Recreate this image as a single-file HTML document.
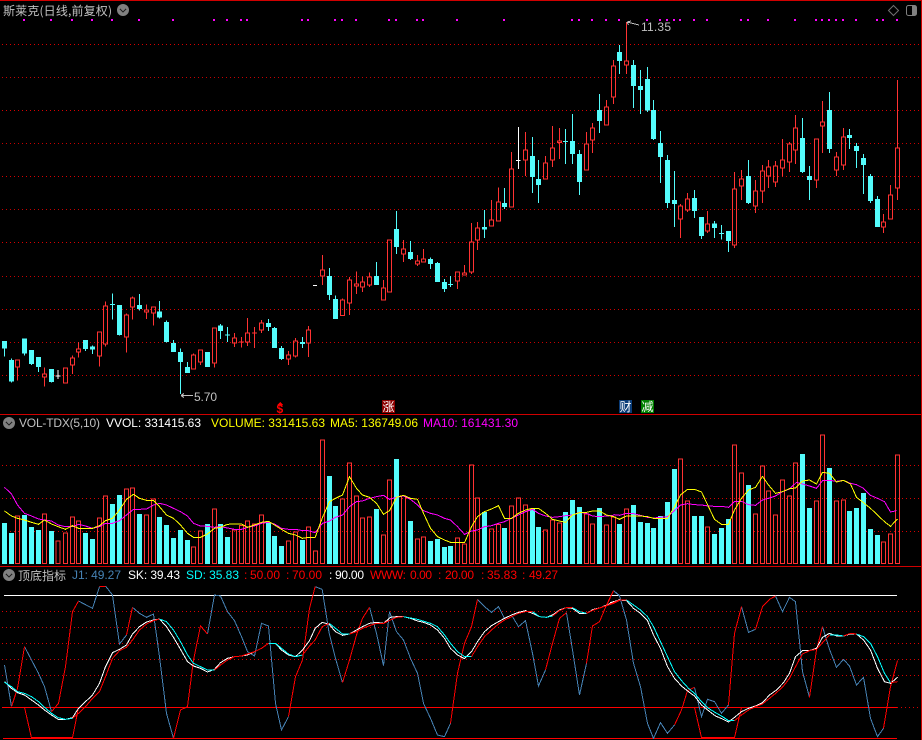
<!DOCTYPE html>
<html lang="zh">
<head>
<meta charset="utf-8">
<title>斯莱克</title>
<style>
html,body{margin:0;padding:0;background:#000;width:922px;height:740px;overflow:hidden}
svg{position:absolute;left:0;top:0;display:block;shape-rendering:crispEdges}
circle{shape-rendering:auto}
text{font-family:"Liberation Sans","WenQuanYi Zen Hei","Noto Sans CJK SC",sans-serif;font-size:12px;white-space:pre}
.cj{font-family:"WenQuanYi Zen Hei","Noto Sans CJK SC",sans-serif}
.cb{fill:none;stroke:#54fcfc;stroke-width:15}
.cw{fill:none;stroke:#54fcfc;stroke-width:3}
.rb{fill:none;stroke:#ff3232;stroke-width:3}
.wb{fill:none;stroke:#fff;stroke-width:3}
.ma5{fill:none;stroke:#ffff00;stroke-width:3}
.ma10{fill:none;stroke:#ff00ff;stroke-width:3}
.jb{fill:none;stroke:#4682b4;stroke-width:3}
.jr{fill:none;stroke:#ff0000;stroke-width:3}
.wl{fill:none;stroke:#fff;stroke-width:3}
.cl{fill:none;stroke:#00ffff;stroke-width:3}
</style>
</head>
<body>
<svg width="922" height="740" viewBox="0 0 922 740" xmlns="http://www.w3.org/2000/svg">
<rect width="922" height="740" fill="#000"/>
<g>
<!-- frame -->
<path d="M0 .5H922M0 414.5H922M0 566.5H922" stroke="#d00000" stroke-width="1" fill="none"/>
<path d="M921.5 0V740" stroke="#d00000" stroke-width="1" fill="none"/>
<!-- price grid -->
<path d="M2 44.5H920M2 110.5H920M2 176.5H920M2 242.5H920M2 309.5H920M2 375.5H920M2 465.5H920M2 498.5H920M2 531.5H920M2 611.5H920M2 627.5H920M2 643.5H920M2 659.5H920M2 675.5H920M897 707.5H920" stroke="#d80000" stroke-width="1" stroke-dasharray="1 3" fill="none"/>
<path d="M2 77.5H920M2 143.5H920M2 209.5H920M2 276.5H920M2 342.5H920" stroke="#c80000" stroke-width="1" stroke-dasharray="1 3" fill="none"/>
<!-- magenta dots -->
<path fill="#ff00ff" d="M23 19h2v2h-2zM50 19h2v2h-2zM71 19h2v2h-2zM91 19h2v2h-2zM111 19h2v2h-2zM138 19h2v2h-2zM172 19h2v2h-2zM213 19h2v2h-2zM226 19h2v2h-2zM240 19h2v2h-2zM246 19h2v2h-2zM301 19h2v2h-2zM307 19h2v2h-2zM334 19h2v2h-2zM341 19h2v2h-2zM355 19h2v2h-2zM388 19h2v2h-2zM395 19h2v2h-2zM416 19h2v2h-2zM422 19h2v2h-2zM456 19h2v2h-2zM503 19h2v2h-2zM571 19h2v2h-2zM578 19h2v2h-2zM591 19h2v2h-2zM605 19h2v2h-2zM618 19h2v2h-2zM646 19h2v2h-2zM659 19h2v2h-2zM666 19h2v2h-2zM673 19h2v2h-2zM679 19h2v2h-2zM693 19h2v2h-2zM706 19h2v2h-2zM740 19h2v2h-2zM747 19h2v2h-2zM767 19h2v2h-2zM794 19h2v2h-2zM815 19h2v2h-2zM821 19h2v2h-2zM828 19h2v2h-2zM835 19h2v2h-2zM842 19h2v2h-2zM855 19h2v2h-2zM876 19h2v2h-2zM882 19h2v2h-2zM896 19h2v2h-2z"/>
<!-- candles 1 -->
<g transform="translate(.1667,210) scale(.33333)">
<path class="cb" d="M13 393V416M34 450V514M73 385V430M94 420V462M115 441V471M154 477V516M256 390V417M277 410V419M358 285V375M418 285V297M478 304V322M499 336V396M520 399V426M541 426V456M562 471V489M622 426V471M661 346V363M682 373V377M805 339V351M823 354V414M844 414V447M907 396V402"/>
<path class="cw" d="M13 416V440M34 445V518M73 430V437M94 462V465M115 471V486M154 516V518M256 417V423M277 406V432M329.5 284H344.5M337 250V329M358 375V377M418 252V302M478 273V325M499 331V398M520 390V399M541 415V552M562 456V471"/>
<path class="cw" d="M661 342V387M682 351V396M805 327V363M823 351V354M844 408V450M907 381V414"/>
<path class="wb" d="M174 480V507M166.5 498H181.5"/>
<path class="rb" d="M46 449.5h12v22h-12zM52 473V512M127 491.5h12v9h-12zM133 472V490M133 502V530M190 473.5h12v46h-12zM211 443.5h12v21h-12zM217 436V442M217 466V492M229 416.5h12v10h-12zM235 396V415M235 428V443M292 365.5h12v73h-12zM298 440V470M310 287.5h12v115h-12zM316 274V286M316 404V410M373 314.5h12v67h-12zM379 310V313M379 383V428M391 263.5h12v28h-12zM397 259V262M397 293V329M433 299.5h12v7h-12zM439 283V298M439 308V327M454 290.5h12v19h-12zM460 311V347M574 434.5h12v43h-12zM580 430V433M595 419.5h12v37h-12zM601 458V465M637 353.5h12v105h-12zM643 460V473M697 383.5h12v16h-12zM703 369V382M703 401V411M716.5 395.5H731.5M724 381V413M736 368.5h12v28h-12zM742 324V367M742 398V408M755.5 369H770.5M763 351V414M778 338.5h12v22h-12zM784 330V337M784 362V369M859 434.5h12v13h-12zM865 423V433M865 449V465M880 392.5h12v46h-12zM886 384V391M886 440V443M919 359.5h12v39h-12zM925 348V358M925 400V441"/>
</g>
<!-- candles 2 -->
<g transform="translate(310.1667,100) scale(.33333)">
<path class="cb" d="M58 528V585M76 597V657M199 528V555M259 387V441M301 456V477M361 477V492M382 489V546M403 546V567M523 381V389M583 309V321M667 168V231M685 237V255M787 123V162M808 162V246M868 30V63"/>
<path class="cw" d="M58 504V600M76 586V597M199 486V528M259 333V462M301 423V480M361 473V507M382 486V489M403 537V576M413.5 554H428.5M421 528V561M523 330V414M583 264V327M667 111V279M685 180V309M758.5 124H773.5M766 87V192M787 42V192M808 150V285M868 -18V99"/>
<path class="wb" d="M9 556H21M625 81V207M618 181H631"/>
<path class="rb" d="M31 509.5h12v19h-12zM37 465V508M37 530V555M91 599.5h12v47h-12zM97 595V598M112 539.5h12v70h-12zM118 531V538M118 611V645M133 551.5h12v7h-12zM139 514V550M139 560V582M151 545.5h12v16h-12zM157 530V544M157 563V576M172 530.5h12v25h-12zM178 517V529M178 557V561M214 563.5h12v37h-12zM220 540V562M232 419.5h12v157h-12zM274 446.5h12v16h-12zM280 420V445M280 464V486M316 482.5h12v10h-12zM322 465V481M322 494V498M334 476.5h12v10h-12zM340 447V475M436 515.5h12v28h-12zM442 545V567M457 518.5h12v7h-12zM463 495V517M478 425.5h12v91h-12zM484 369V424M484 518V522M496 383.5h12v37h-12zM502 366V382M502 422V450M538 359.5h12v19h-12zM544 300V358M559 305.5h12v58h-12zM565 262V304M598 206.5h12v115h-12zM604 156V205M640 149.5h12v31h-12zM646 96V148M646 182V228M700 188.5h12v49h-12zM706 168V187M721 143.5h12v37h-12zM727 78V142M727 182V201M742 122.5h12v5h-12zM748 84V121M748 129V177M823 131.5h12v79h-12zM829 96V130M841 83.5h12v37h-12zM847 69V82M847 122V159M883 20.5h12v55h-12zM889 0V19"/>
</g>
<!-- candles 3 -->
<g transform="translate(610.1667,0) scale(.33333)">
<path class="cb" d="M28 156V183M70 195V258M91 258V270M112 237V331M130 330V417M151 429V471M172 480V609M193 600V612M253 594V633M274 651V708M313 670V684M355 693V723M415 528V609M577 414V516M598 528V540M658 330V447M718 405V414M739 438V453M760 474V495M781 528V603M802 597V681"/>
<path class="cw" d="M28 135V222M70 180V324M91 210V342M112 201V336M130 300V420M151 393V549M172 465V624M193 513V681M253 570V654M274 708V717M313 663V714M326.5 700H341.5M334 675V718M355 723V756M415 480V612M577 354V519M598 498V600M658 276V459M718 387V447M739 429V504M760 462V582M781 522V609M802 588V597"/>
<path class="rb" d="M4 197.5h12v94h-12zM10 180V196M10 293V312M43 182.5h12v13h-12zM49 66V181M49 197V222M205 617.5h12v40h-12zM211 612V616M211 659V714M226 596.5h12v34h-12zM232 579V595M232 632V636M286 671.5h12v22h-12zM292 633V670M292 695V699M367 566.5h12v169h-12zM373 516V565M373 737V744M388 536.5h12v22h-12zM394 510V535M394 560V600M430 572.5h12v46h-12zM436 540V571M436 620V639M451 512.5h12v61h-12zM457 495V511M457 575V609M469 500.5h12v28h-12zM475 480V499M475 530V564M490 497.5h12v49h-12zM496 483V496M496 548V561M511 479.5h12v25h-12zM517 417V478M517 506V530M532 431.5h12v55h-12zM538 426V430M538 488V516M550 383.5h12v67h-12zM556 345V382M556 452V492M613 416.5h12v124h-12zM619 542V564M631 365.5h12v13h-12zM637 303V364M637 380V459M673 470.5h12v40h-12zM679 456V469M679 512V528M694 410.5h12v85h-12zM700 384V409M700 497V510M814 665.5h12v16h-12zM820 642V664M820 683V699M835 584.5h12v73h-12zM841 555V583M856 443.5h12v121h-12zM862 240V442M862 566V600"/>
</g>
<!-- volume bars 1 -->
<g transform="translate(.1667,410) scale(.33333)">
<path class="cb" d="M13 339V462M34 369V462M73 315V462M94 351V462M115 360V462M154 363V462M256 369V462M277 387V462M337 282V462M358 255V462M418 312V462M478 321V462M499 345V462M520 384V462M541 360V462M562 390V462M622 342V462M661 342V462M682 381V462M805 339V462M823 378V462M844 408V462M907 390V462"/>
<path class="rb" d="M46 317.5h12V460.5h-12zM127 311.5h12V460.5h-12zM168 392.5h12V460.5h-12zM190 368.5h12V460.5h-12zM211 320.5h12V460.5h-12zM229 332.5h12V460.5h-12zM292 323.5h12V460.5h-12zM310 257.5h12V460.5h-12zM373 236.5h12V460.5h-12zM391 233.5h12V460.5h-12zM433 314.5h12V460.5h-12zM454 266.5h12V460.5h-12zM574 410.5h12V460.5h-12zM595 362.5h12V460.5h-12zM637 296.5h12V460.5h-12zM697 359.5h12V460.5h-12zM718 346.5h12V460.5h-12zM736 332.5h12V460.5h-12zM757 341.5h12V460.5h-12zM778 314.5h12V460.5h-12zM859 392.5h12V460.5h-12zM880 365.5h12V460.5h-12zM919 350.5h12V460.5h-12z"/>
</g>
<g transform="translate(310.1667,410) scale(.33333)">
<path class="cb" d="M58 198V462M76 288V462M199 297V462M259 147V462M301 333V462M361 393V462M382 387V462M403 411V462M421 408V462M523 306V462M583 354V462M667 297V462M685 351V462M766 306V462M787 270V462M808 291V462M868 294V462"/>
<path class="rb" d="M10 422.5h12V460.5h-12zM31 89.5h12V460.5h-12zM91 266.5h12V460.5h-12zM112 158.5h12V460.5h-12zM133 257.5h12V460.5h-12zM151 323.5h12V460.5h-12zM172 320.5h12V460.5h-12zM214 374.5h12V460.5h-12zM232 209.5h12V460.5h-12zM274 257.5h12V460.5h-12zM316 386.5h12V460.5h-12zM334 380.5h12V460.5h-12zM436 383.5h12V460.5h-12zM457 401.5h12V460.5h-12zM478 164.5h12V460.5h-12zM496 263.5h12V460.5h-12zM538 356.5h12V460.5h-12zM559 343.5h12V460.5h-12zM598 287.5h12V460.5h-12zM619 263.5h12V460.5h-12zM640 284.5h12V460.5h-12zM700 359.5h12V460.5h-12zM721 329.5h12V460.5h-12zM742 338.5h12V460.5h-12zM823 311.5h12V460.5h-12zM841 341.5h12V460.5h-12zM883 344.5h12V460.5h-12z"/>
</g>
<g transform="translate(610.1667,410) scale(.33333)">
<path class="cb" d="M28 342V462M70 285V462M91 336V462M112 339V462M130 354V462M151 318V462M172 276V462M193 177V462M253 318V462M274 318V462M313 372V462M334 354V462M355 327V462M415 225V462M577 132V462M598 294V462M658 174V462M718 303V462M739 294V462M760 249V462M781 357V462M802 375V462"/>
<path class="rb" d="M4 321.5h12V460.5h-12zM43 296.5h12V460.5h-12zM205 146.5h12V460.5h-12zM226 272.5h12V460.5h-12zM286 350.5h12V460.5h-12zM367 104.5h12V460.5h-12zM388 188.5h12V460.5h-12zM430 311.5h12V460.5h-12zM451 167.5h12V460.5h-12zM469 242.5h12V460.5h-12zM490 314.5h12V460.5h-12zM511 209.5h12V460.5h-12zM532 257.5h12V460.5h-12zM550 158.5h12V460.5h-12zM613 272.5h12V460.5h-12zM631 74.5h12V460.5h-12zM673 272.5h12V460.5h-12zM694 269.5h12V460.5h-12zM814 395.5h12V460.5h-12zM835 371.5h12V460.5h-12zM856 134.5h12V460.5h-12z"/>
</g>
<!-- indicator solid lines -->
<path d="M4 595.5H897" stroke="#fff" stroke-width="1" fill="none"/>
<path d="M2 707.5H897M3 738.5H897" stroke="#ff0000" stroke-width="1" fill="none"/>
<path d="M31 737.5H73M701 737.5H734" stroke="#ff0000" stroke-width="1" fill="none"/>
</g>
<!-- volume MA lines -->
<g transform="translate(.1667,410) scale(.33333)">
<polyline class="ma10" points="13,232 34,252 52,285 73,310 94,318 115,327 133,330 154,333 174,345 196,350 217,350 235,343 256,348 277,355 298,350 316,340 337,340 358,332 379,315 400,298 418,298 439,297 460,285 478,280 499,285 520,295 541,305 562,318 580,340 601,348 622,349 643,352 661,350 682,354 703,358 724,358 742,352 763,348 784,340 805,337 823,342 844,355 865,358 886,358 907,362 925,362"/>
<polyline class="ma5" points="13,303 34,318 52,325 73,330 94,337 115,343 133,330 154,342 174,350 196,358 217,347 235,355 256,355 277,355 298,347 316,332 337,325 358,300 379,268 400,253 418,265 439,271 460,271 478,290 499,315 520,325 541,345 562,370 580,382 601,382 622,372 643,355 661,352 682,343 703,342 724,342 742,352 763,345 784,337 805,334 823,345 844,358 865,370 886,375 907,385 925,382"/>
</g>
<g transform="translate(310.1667,410) scale(.33333)">
<polyline class="ma10" points="-6,362 15,368 37,340 58,333 76,322 97,315 118,290 139,275 157,273 178,265 199,260 220,256 238,268 259,262 280,258 301,268 322,285 340,302 361,310 382,315 403,325 421,330 442,350 463,373 484,363 502,360 523,350 544,347 565,340 583,335 604,325 625,315 646,305 667,298 685,310 706,318 727,322 748,320 766,317 787,315 808,307 829,310 847,318 868,320 889,318 910,316"/>
<polyline class="ma5" points="-6,382 15,382 37,322 58,275 76,265 97,255 118,200 139,235 157,255 178,262 199,280 220,313 238,302 259,262 280,256 301,265 322,268 340,310 361,355 382,380 403,390 421,397 442,398 463,398 484,350 502,320 523,305 544,297 565,287 583,325 604,325 625,310 646,300 667,295 685,295 706,310 727,328 748,333 766,337 787,315 808,308 829,307 847,303 868,303 889,315 910,320"/>
</g>
<g transform="translate(610.1667,410) scale(.33333)">
<polyline class="ma10" points="10,314 28,316 49,310 70,311 91,316 112,322 130,324 151,322 172,320 193,302 211,285 232,281 253,284 274,285 295,288 313,289 334,289 355,292 373,275 394,274 415,284 436,286 457,270 475,265 496,258 517,245 538,237 559,217 577,222 598,228 619,235 637,212 658,211 679,214 700,211 721,220 739,224 760,235 781,256 802,265 823,275 841,306 859,302"/>
<polyline class="ma5" points="10,320 28,328 49,318 70,318 91,318 112,320 130,325 151,325 172,325 193,290 211,255 232,238 253,238 274,246 295,290 313,328 334,343 355,343 373,300 394,265 415,240 436,232 457,199 475,225 496,250 517,245 538,236 556,234 577,213 598,210 619,222 637,187 658,190 679,216 700,211 721,222 739,262 760,278 781,295 802,315 823,335 841,349 862,327"/>
</g>
<!-- indicator lines -->
<g transform="translate(.1667,560) scale(.33333)">
<path class="jb" d="M13 315L34 440M73 260L94 300L115 340L133 380L154 455M235 123L277 145L298 80M316 78L337 105L358 252L379 225M397 142L418 160L439 172L460 162L478 290L499 460L520 535M622 222L643 105L661 108L682 155L703 182L724 230L742 275L763 288L784 190L805 198L826 430L844 510L865 470"/>
<path class="jr" d="M13 442H73L94 534H217L235 442M34 440L52 385L73 260M154 455L175 430L196 320L217 155L235 123M298 79H316M379 225L397 142M520 535L541 450L562 440L580 300L601 198L622 222M865 470L886 350L907 300L928 145"/>
<polyline class="wl" points="13,365 34,385 52,398 73,405 94,420 115,435 133,450 154,465 174,478 196,478 217,473 235,445 256,425 277,405 298,370 316,320 337,278 358,268 379,255 397,222 418,200 439,186 460,180 478,177 499,200 520,232 541,268 562,305 580,318 601,325 622,336 643,328 661,308 682,295 703,290 724,288 742,285 763,275 784,265 805,250 826,250 844,270 865,285 886,290 907,270 928,242"/>
<path class="cl" d="M13 367L34 380L52 395L73 400L94 410L115 425L133 442L154 460L174 473L196 478L217 475M478 177L499 185L520 210L541 245L562 285L580 310L601 320L622 330L643 330M805 250L826 250L844 265L865 282L886 290L907 285"/>
<path class="jr" d="M217 475L235 460L256 440L277 415L298 395L316 350L337 295L358 272L379 262L397 240L418 210L439 192L460 182L478 177M643 330L661 315L682 300L703 290L724 288L763 275L784 265L805 250M907 285L928 258"/>
</g>
<g transform="translate(310.1667,560) scale(.33333)">
<path class="jb" d="M15 80L36 88L57 220L76 295L97 368M178 142L199 220L220 317L238 155L259 215L280 240L301 295L322 340L340 430L361 475L382 525L403 530L421 490M502 118L523 140L544 157L565 140L583 175L604 165L625 200L646 182L667 280L685 378L706 330M769 158L787 270L808 405L829 310M910 92L930 108"/>
<path class="jr" d="M-2 145L15 80M97 368L118 300L139 225L157 175L178 142M421 490L442 340L463 250L484 200L502 118M706 330L727 250L748 175L769 158M829 310L847 198L868 185L889 135L910 92"/>
<polyline class="wl" points="-2,242 15,205 36,187 57,193 76,215 97,226 118,222 139,210 157,200 178,190 199,187 220,190 241,172 259,170 280,170 301,175 322,183 340,187 361,195 382,210 403,235 421,265 442,285 463,296 484,275 502,245 523,215 544,197 565,185 583,175 604,165 625,157 646,152 667,160 688,170 709,172 727,165 748,150 769,143 787,145 808,160 829,160 850,148 871,143 889,135 910,127 930,118"/>
<path class="cl" d="M57 190L76 205L97 222L118 222M280 170L322 178L361 190L382 200L403 225L421 250L442 275L463 290L484 290M667 155L688 170L709 172L727 168M787 143L808 155L829 160"/>
<path class="jr" d="M-2 258L15 240L36 200L57 190M118 222L139 215L157 205L178 197L199 190L220 190L241 180L259 172L280 170M484 290L502 260L523 230L544 210L565 192L583 180L604 170L625 160L646 155L667 155M727 168L748 152L769 143L787 143M829 160L850 150L871 143L889 137L910 130L930 120"/>
</g>
<g transform="translate(610.1667,560) scale(.33333)">
<path class="jb" d="M10 92L28 108L49 180L70 310L91 380L112 490L130 535L151 488L172 520L193 495M253 382L274 470L292 418L313 425L334 460L355 435M394 140L415 217L436 208M496 108L517 155L538 112L556 125L577 335L598 412M637 200L658 268L679 322L700 298L718 318L739 375L760 352L781 475L802 530L820 505"/>
<path class="jr" d="M-10 135L10 92M193 495L214 450L232 392L253 382M355 435L373 220L394 140M436 208L457 140L478 118L496 108M598 412L619 270L637 200M820 505L841 380L862 302M0 442H253L274 533H373L394 442"/>
<polyline class="wl" points="0,128 10,125 28,120 49,122 70,145 91,160 112,182 130,225 151,265 172,320 193,355 214,378 235,395 253,408 274,435 295,452 316,468 337,477 355,486 373,472 394,455 415,445 436,438 457,428 478,405 499,390 520,368 538,340 556,290 577,272 598,272 619,265 637,232 658,220 679,228 700,228 721,222 739,222 760,240 781,270 802,325 823,365 841,370 862,352"/>
<path class="cl" d="M49 120L70 135L91 150L112 170L130 200L151 245L172 290L193 335L214 362L235 385L253 400L274 425L295 445L316 458L337 470L355 482L373 482M658 225L679 225L700 228M739 222L760 230L781 250L802 290L823 340L841 368"/>
<path class="jr" d="M0 132L28 120L49 120M373 482L394 465L415 450L436 440L457 432L478 415L499 398L520 378L538 355L556 320L577 282L598 272L619 268L637 248L658 225M700 228L721 220L739 222M841 368L862 365"/>
</g>
<!-- badges -->
<rect x="382" y="400" width="13" height="13" fill="#8c0000"/>
<rect x="619" y="400" width="13" height="13" fill="#0a3c78"/>
<rect x="641" y="400" width="13" height="13" fill="#008000"/>
<text class="cj" x="382.5" y="411" fill="#fff">涨</text>
<text class="cj" x="619.5" y="411" fill="#fff">财</text>
<text class="cj" x="641.5" y="411" fill="#fff">减</text>
<path d="M280 402l-3 3h6z" fill="#ff0000"/>
<text x="276.500" y="413" fill="#ff0000" font-weight="bold">$</text>
<!-- price markers -->
<path d="M181 395.5H193M181 395.5l3-2M181 395.5l3 2" stroke="#c0c0c0" stroke-width="1" fill="none"/>
<text x="194" y="401" fill="#c0c0c0" textLength="23">5.70</text>
<path d="M627 22L639 25M627 22l4-1M627 22l1.500 3" stroke="#c0c0c0" stroke-width="1" fill="none"/>
<text x="641" y="31" fill="#c0c0c0" textLength="30">11.35</text>
<!-- title -->
<text class="cj" x="3" y="15" fill="#c0c0c0" textLength="109">斯莱克(日线,前复权)</text>
<circle cx="123" cy="10" r="6" fill="#808080"/>
<path d="M120 9l3 3 3-3" fill="none" stroke="#222" stroke-width="1.200"/>
<path d="M893.500 5.500l5 5-5 5-5-5z" fill="none" stroke="#707070" stroke-width="1" style="shape-rendering:auto"/>
<rect x="906.500" y="5.500" width="10" height="10" rx="2" fill="none" stroke="#808080" stroke-width="1" style="shape-rendering:auto"/>
<rect x="912" y="6" width="4" height="9" fill="#808080"/>
<!-- volume header -->
<circle cx="9" cy="423" r="6" fill="#808080"/>
<path d="M6 422l3 3 3-3" fill="none" stroke="#222" stroke-width="1.200"/>
<text x="19" y="427" fill="#c0c0c0" textLength="81">VOL-TDX(5,10)</text>
<text x="106" y="427" fill="#ffffff" textLength="95">VVOL: 331415.63</text>
<text x="211" y="427" fill="#ffff00" textLength="114">VOLUME: 331415.63</text>
<text x="330" y="427" fill="#ffff00" textLength="88">MA5: 136749.06</text>
<text x="423" y="427" fill="#ff00ff" textLength="95">MA10: 161431.30</text>
<!-- indicator header -->
<circle cx="9" cy="575" r="6" fill="#808080"/>
<path d="M6 574l3 3 3-3" fill="none" stroke="#222" stroke-width="1.200"/>
<text class="cj" x="18" y="580" fill="#c0c0c0">顶底指标</text>
<text x="72" y="579" fill="#4682b4" textLength="49">J1: 49.27</text>
<text x="128" y="579" fill="#ffffff" textLength="52">SK: 39.43</text>
<text x="186" y="579" fill="#00ffff" textLength="53">SD: 35.83</text>
<text x="244" y="579" fill="#ff0000">:</text>
<text x="250" y="579" fill="#ff0000" textLength="30">50.00</text>
<text x="286" y="579" fill="#ff0000">:</text>
<text x="292" y="579" fill="#ff0000" textLength="30">70.00</text>
<text x="329" y="579" fill="#ffffff">:</text>
<text x="335" y="579" fill="#ffffff" textLength="29">90.00</text>
<text x="370" y="579" fill="#ff0000" textLength="36">WWW:</text>
<text x="410" y="579" fill="#ff0000" textLength="22">0.00</text>
<text x="438" y="579" fill="#ff0000">:</text>
<text x="445" y="579" fill="#ff0000" textLength="29">20.00</text>
<text x="481" y="579" fill="#ff0000">:</text>
<text x="487" y="579" fill="#ff0000" textLength="30">35.83</text>
<text x="522" y="579" fill="#ff0000">:</text>
<text x="529" y="579" fill="#ff0000" textLength="29">49.27</text>
</svg>
</body>
</html>
